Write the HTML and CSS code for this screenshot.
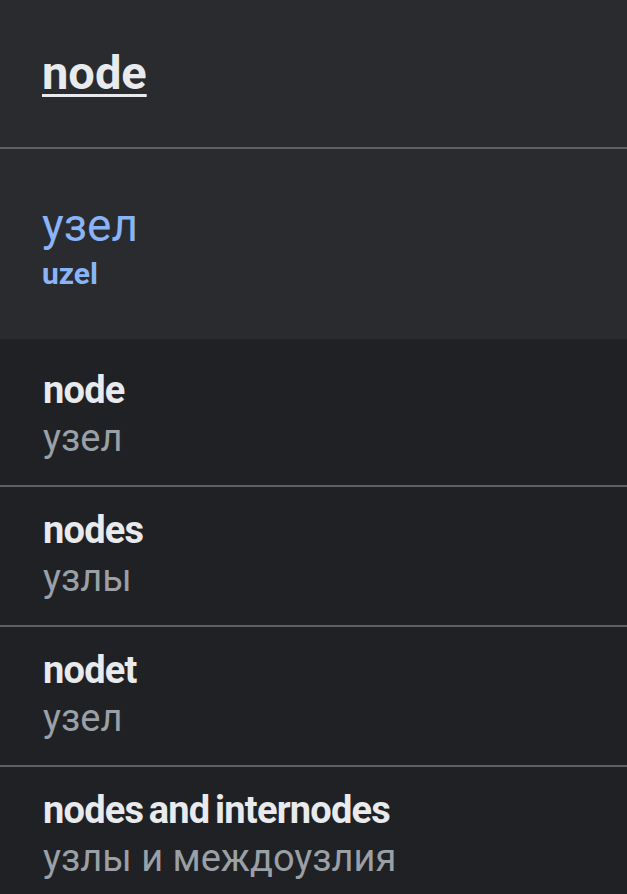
FILE: index.html
```html
<!DOCTYPE html>
<html lang="ru">

<head>
    <meta charset="UTF-8">
    <meta name="viewport" content="width=device-width, initial-scale=1.0">
    <title>node</title>
    <link rel="stylesheet" href="styles.css">
</head>

<body>
    <div class="card">
        <div class="head">
            <a class="word" href="#">node</a>
        </div>
        <div class="main">
            <div class="tr">узел</div>
            <div class="translit">uzel</div>
        </div>
        <div class="list">
            <div class="row">
                <div class="src">node</div>
                <div class="dst">узел</div>
            </div>
            <div class="row">
                <div class="src">nodes</div>
                <div class="dst">узлы</div>
            </div>
            <div class="row">
                <div class="src">nodet</div>
                <div class="dst">узел</div>
            </div>
            <div class="row">
                <div class="src">nodes and internodes</div>
                <div class="dst">узлы и междоузлия</div>
            </div>
        </div>
    </div>
</body>

</html>
```

FILE: styles.css
```css
body {
    margin: 0;
    background-color: #202124;
    font-family: Roboto, "Noto Sans", sans-serif;
}

.card {
    width: 627px;
    height: 894px;
    overflow: hidden;
}

.head {
    background-color: #2a2b2e;
    padding: 45px 42px 46px;
    border-bottom: 2px solid #5f6063;
    font-size: 47px;
    line-height: 56px;
}

.word {
    color: #e8eaed;
    font-weight: 700;
    text-decoration: underline;
    text-decoration-thickness: 3px;
    text-underline-offset: 5px;
}

.main {
    background-color: #2a2b2e;
    padding: 49px 42px 47px;
    color: #8ab4f8;
}

.tr {
    font-size: 46px;
    line-height: 54px;
}

.translit {
    margin-top: 4px;
    font-size: 30px;
    font-weight: 700;
    line-height: 36px;
}

.list {
    padding-top: 8px;
}

.row {
    padding: 19px 43px 23px;
    border-bottom: 2px solid #5f6063;
    line-height: 48px;
    font-size: 38px;
}

.src {
    color: #e8eaed;
    font-weight: 700;
    letter-spacing: -0.8px;
    word-spacing: -3px;
}

.dst {
    color: #9aa0a6;
}
```
